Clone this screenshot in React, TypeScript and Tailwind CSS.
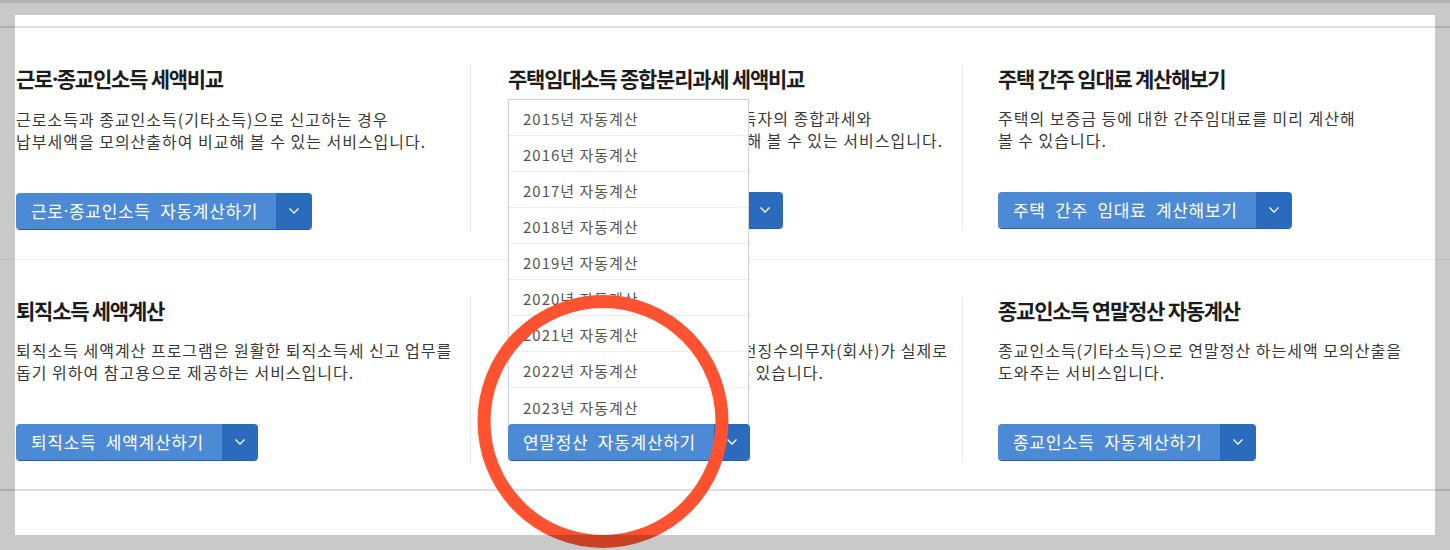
import React from "react";

type CardProps = {
  title: React.ReactNode;
  lines: string[];
  button: React.ReactNode;
  divider?: boolean;
  children?: React.ReactNode;
};

const years = [2015, 2016, 2017, 2018, 2019, 2020, 2021, 2022, 2023];

// narrow latin middle dot, the CJK one is full width
const Dot = () => <span className="font-['Noto_Sans',sans-serif]">·</span>;

function Chevron() {
  return (
    <svg width="12" height="8" viewBox="0 0 12 8" fill="none">
      <polyline points="1.5,1.5 6,6 10.5,1.5" stroke="white" strokeWidth="1.3" />
    </svg>
  );
}

function CalcButton({ label }: { label: React.ReactNode }) {
  return (
    <div className="inline-flex h-[36px] overflow-hidden rounded-[4px] shadow-[0_1px_0_#2a5c9e]">
      <span className="flex items-center bg-[#4d8ad5] pl-[15px] pr-[18px] text-[17px] tracking-[0.7px] text-white [word-spacing:5px]">
        {label}
      </span>
      <span className="flex w-[36px] items-center justify-center bg-[#2a6bbd]">
        <Chevron />
      </span>
    </div>
  );
}

function Card({ title, lines, button, divider, children }: CardProps) {
  return (
    <div
      className={
        divider
          ? "flex h-[165px] flex-col border-l border-[#e8e8e8] pl-[37px]"
          : "flex h-[165px] flex-col pl-[16px]"
      }
    >
      <h2 className="text-[21px] font-bold leading-[26px] tracking-[-1.25px] text-[#1c1c1c]">
        {title}
      </h2>
      <p className="mt-[16px] text-[16px] leading-[22px] tracking-[1px] text-[#383838]">
        {lines[0]}
        <br />
        {lines[1]}
      </p>
      <div className="relative mt-[41px] self-start">
        {children}
        <CalcButton label={button} />
      </div>
    </div>
  );
}

function SideCard({ title, lines, button }: CardProps) {
  return (
    <div className="flex h-[165px] flex-col border-l border-[#e8e8e8] pl-[35px]">
      <h2 className="text-[21px] font-bold leading-[26px] tracking-[-1.25px] text-[#1c1c1c]">
        {title}
      </h2>
      <p className="mt-[16px] text-[16px] leading-[22px] tracking-[1px] text-[#383838]">
        {lines[0]}
        <br />
        {lines[1]}
      </p>
      <div className="mt-[41px] self-start">
        <CalcButton label={button} />
      </div>
    </div>
  );
}

export default function App() {
  return (
    <div className="relative h-[550px] w-[1450px] overflow-hidden bg-white font-['Noto_Sans_CJK_KR','Noto_Sans',sans-serif]">
      {/* page behind the capture */}
      <div className="h-[3px] bg-[#e4e4e4]" />
      <div className="h-[23px]" />
      <div className="h-[2px] bg-[#dedede]" />

      <div className="grid grid-cols-[470px_492px_488px] pb-[29px] pt-[37px]">
        <Card
          title={
            <>
              근로<Dot />종교인소득 세액비교
            </>
          }
          lines={[
            "근로소득과 종교인소득(기타소득)으로 신고하는 경우",
            "납부세액을 모의산출하여 비교해 볼 수 있는 서비스입니다.",
          ]}
          button={
            <>
              근로<Dot />종교인소득 자동계산하기
            </>
          }
        />
        <Card
          divider
          title="주택임대소득 종합분리과세 세액비교"
          lines={[
            "주택임대소득이 있는 개인 사업소득자의 종합과세와",
            "분리과세 적용 시 납부세액을 비교해 볼 수 있는 서비스입니다.",
          ]}
          button="주택임대소득 자동계산하기"
        />
        <SideCard
          title="주택 간주 임대료 계산해보기"
          lines={["주택의 보증금 등에 대한 간주임대료를 미리 계산해", "볼 수 있습니다."]}
          button="주택 간주 임대료 계산해보기"
        />
      </div>

      <div className="h-[1px] bg-[#f0f0f0]" />

      <div className="grid grid-cols-[470px_492px_488px] pb-[27px] pt-[37px]">
        <Card
          title="퇴직소득 세액계산"
          lines={[
            "퇴직소득 세액계산 프로그램은 원활한 퇴직소득세 신고 업무를",
            "돕기 위하여 참고용으로 제공하는 서비스입니다.",
          ]}
          button="퇴직소득 세액계산하기"
        />
        <Card
          divider
          title="연말정산 자동계산"
          lines={[
            "연말정산 자동계산은 근로소득 원천징수의무자(회사)가 실제로",
            "미리 연말정산 세액을 계산해 볼 수 있습니다.",
          ]}
          button="연말정산 자동계산하기"
        >
          {/* open year menu */}
          <ul className="absolute bottom-full left-0 z-10 w-[241px] border border-b-0 border-[#d2d2d2] bg-white shadow-[0_0_4px_rgba(0,0,0,0.08)]">
            {years.map((y, i) => (
              <li
                key={y}
                className={
                  i === years.length - 1
                    ? "flex h-[36px] items-center pl-[14px] pt-[4px] text-[15px] tracking-[1px] text-[#555]"
                    : "flex h-[36px] items-center border-b border-[#ececec] pl-[14px] pt-[4px] text-[15px] tracking-[1px] text-[#555]"
                }
              >
                {y}년 자동계산
              </li>
            ))}
          </ul>
        </Card>
        <SideCard
          title="종교인소득 연말정산 자동계산"
          lines={["종교인소득(기타소득)으로 연말정산 하는세액 모의산출을", "도와주는 서비스입니다."]}
          button="종교인소득 자동계산하기"
        />
      </div>

      <div className="h-[2px] bg-[#dedede]" />

      {/* red highlight circle */}
      <svg
        className="pointer-events-none absolute left-[470px] top-[288px] z-20"
        width="266"
        height="268"
        viewBox="0 0 266 268"
      >
        <ellipse cx="133" cy="133.5" rx="119" ry="120" fill="none" stroke="#ff5230" strokeWidth="13" />
      </svg>

      {/* dimmed frame of the capture */}
      <div className="pointer-events-none absolute inset-0 z-30 border-[15px] border-black/[0.21]" />
    </div>
  );
}
